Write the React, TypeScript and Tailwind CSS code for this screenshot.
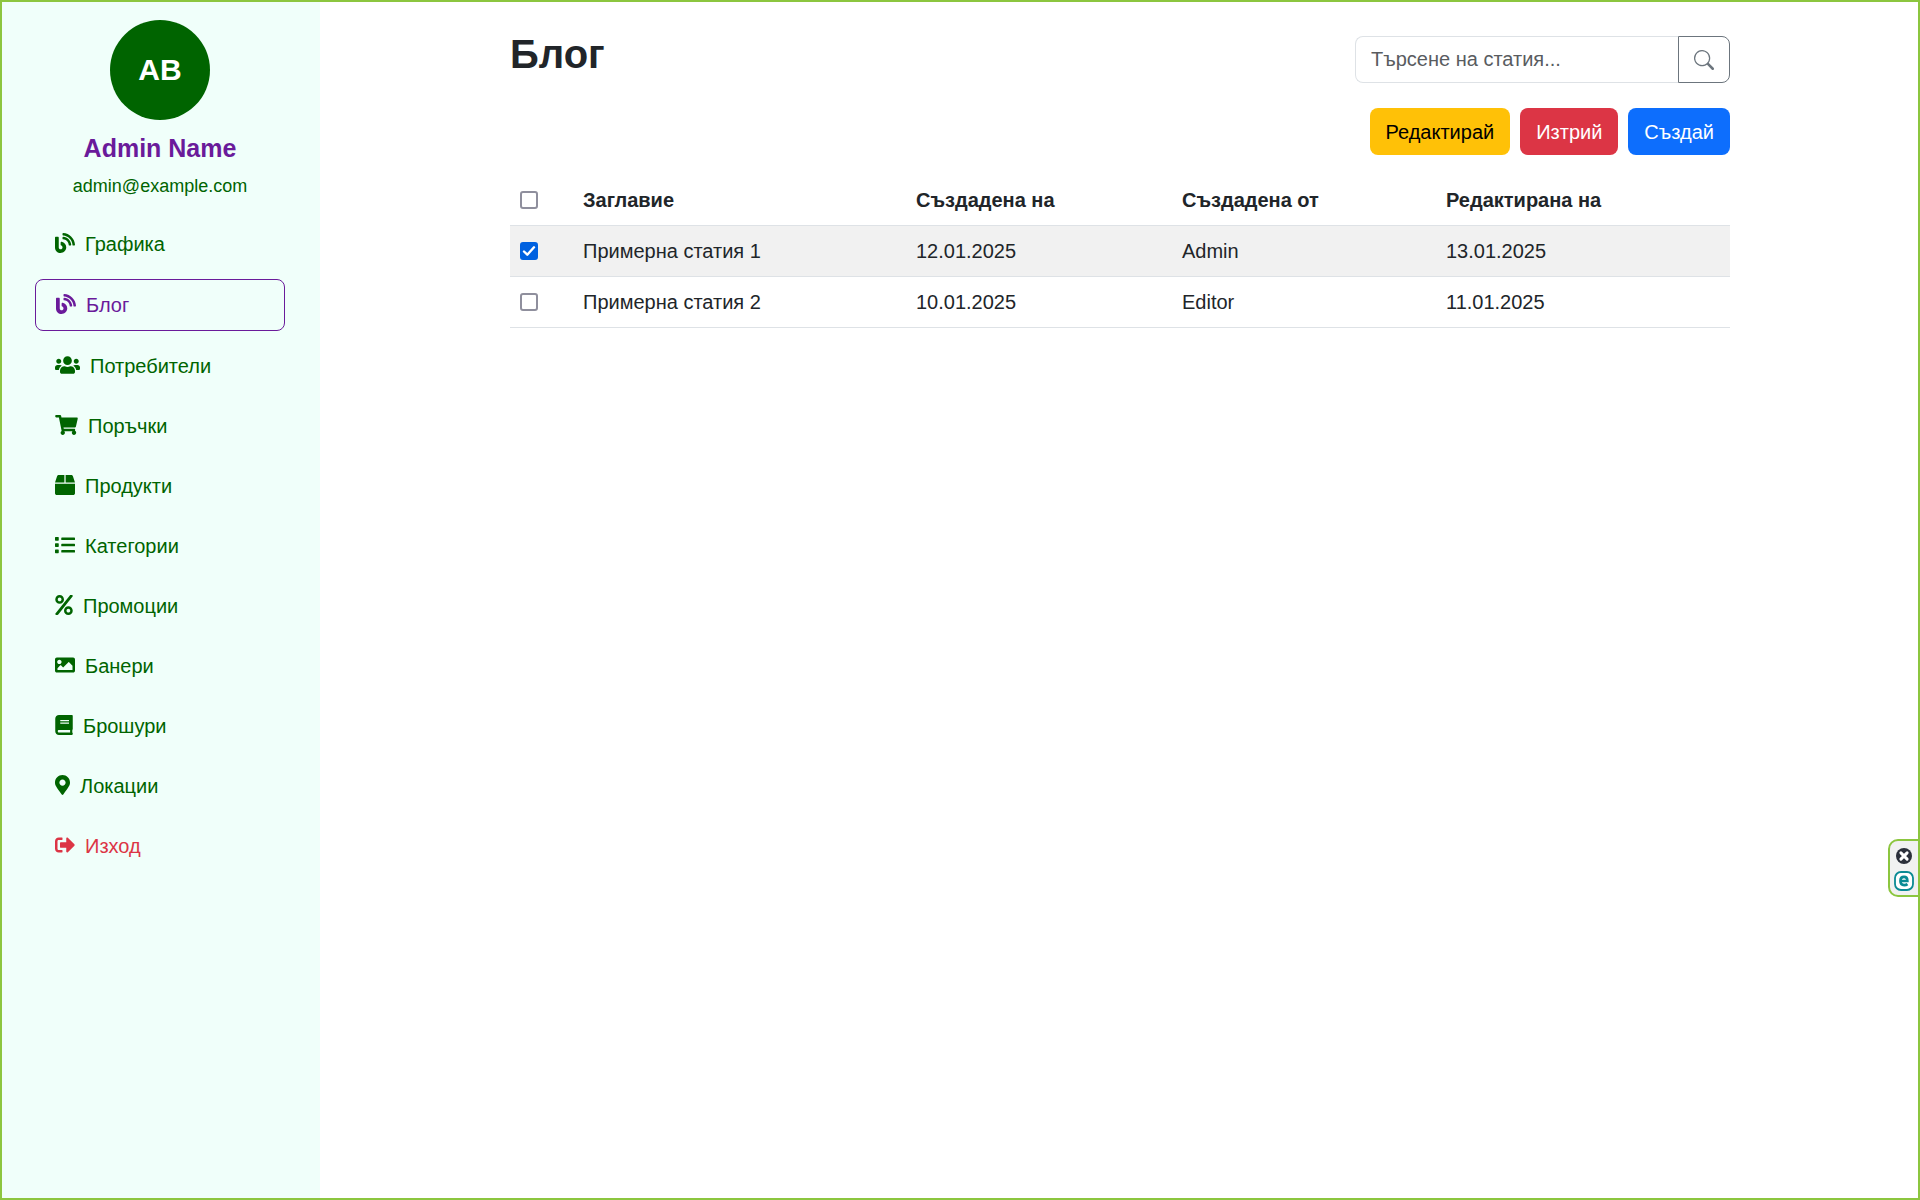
import { useState } from "react";
import type { IconType } from "react-icons";
import {
  FaBlog,
  FaBook,
  FaBox,
  FaImage,
  FaList,
  FaMapMarkerAlt,
  FaPercent,
  FaShoppingCart,
  FaSignOutAlt,
  FaUsers,
} from "react-icons/fa";
import { BsSearch } from "react-icons/bs";

type NavItem = { label: string; icon: IconType; width: string; variant?: "active" | "danger" };

const navItems: NavItem[] = [
  { label: "Графика", icon: FaBlog, width: "w-5" },
  { label: "Блог", icon: FaBlog, width: "w-5", variant: "active" },
  { label: "Потребители", icon: FaUsers, width: "w-[25px]" },
  { label: "Поръчки", icon: FaShoppingCart, width: "w-[23px]" },
  { label: "Продукти", icon: FaBox, width: "w-5" },
  { label: "Категории", icon: FaList, width: "w-5" },
  { label: "Промоции", icon: FaPercent, width: "w-[18px]" },
  { label: "Банери", icon: FaImage, width: "w-5" },
  { label: "Брошури", icon: FaBook, width: "w-[18px]" },
  { label: "Локации", icon: FaMapMarkerAlt, width: "w-[15px]" },
  { label: "Изход", icon: FaSignOutAlt, width: "w-5", variant: "danger" },
];

const navStyles = {
  base: "text-[#006400]",
  active: "rounded-lg border border-[#6a1b9a] text-[#6a1b9a]",
  danger: "text-[#dc3545]",
};

const articles = [
  { id: 1, title: "Примерна статия 1", created: "12.01.2025", author: "Admin", edited: "13.01.2025" },
  { id: 2, title: "Примерна статия 2", created: "10.01.2025", author: "Editor", edited: "11.01.2025" },
];

function Checkbox({ label, checked, onChange }: { label: string; checked: boolean; onChange: () => void }) {
  return (
    <span className="grid size-[18px]">
      <input
        type="checkbox"
        aria-label={label}
        checked={checked}
        onChange={onChange}
        className="peer col-start-1 row-start-1 size-[18px] appearance-none rounded-[3px] border-2 border-[#8f8f9d] bg-white checked:border-[#0061e0] checked:bg-[#0061e0]"
      />
      <svg
        viewBox="0 0 18 18"
        aria-hidden="true"
        className="pointer-events-none col-start-1 row-start-1 hidden size-[18px] peer-checked:block"
      >
        <path
          d="M4 9.5 L7.3 12.7 L14 5.3"
          fill="none"
          stroke="white"
          strokeWidth="2.4"
          strokeLinecap="round"
          strokeLinejoin="round"
        />
      </svg>
    </span>
  );
}

function Sidebar() {
  return (
    <aside className="flex w-80 shrink-0 flex-col items-center bg-[#f0fffa] px-[35px] pt-5">
      <div className="flex size-[100px] items-center justify-center rounded-full bg-[#006400] text-[30px] font-bold text-white">
        AB
      </div>
      <h2 className="mt-3 text-[25px] leading-8 font-bold text-[#6a1b9a]">Admin Name</h2>
      <p className="mt-2 text-[18px] leading-7 text-[#006400]">admin@example.com</p>
      <nav className="mt-[19px] flex w-full flex-col gap-[10px]">
        {navItems.map(({ label, icon: Icon, width, variant }) => (
          <a
            key={label}
            href="#"
            className={`flex items-center gap-[10px] px-5 py-[10px] leading-[30px] ${navStyles[variant ?? "base"]}`}
          >
            <Icon className={`mb-0.5 h-5 shrink-0 ${width}`} />
            {label}
          </a>
        ))}
      </nav>
    </aside>
  );
}

function SafeBrowsingBadge() {
  return (
    <div className="fixed top-[839px] right-0 flex w-8 flex-col items-center gap-[7px] rounded-l-[10px] border-2 border-[#8cc63f] bg-[#f1f1f1] pt-[7px] pb-1">
      <button type="button" aria-label="Close" className="block">
        <svg viewBox="0 0 16 16" className="size-4">
          <circle cx="8" cy="8" r="8" fill="#2b2f3a" />
          <path d="M4.9 4.9 L11.1 11.1 M11.1 4.9 L4.9 11.1" stroke="#fff" strokeWidth="3" strokeLinecap="round" />
        </svg>
      </button>
      <svg viewBox="0 0 20 20" className="size-5" aria-hidden="true">
        <rect x="1" y="1" width="18" height="18" rx="6" fill="#fff" stroke="#0a8a94" strokeWidth="1.8" />
        <path
          d="M6.4 10 H13.4 C13.4 7.3 12.1 5.9 10 5.9 C7.8 5.9 6.4 7.4 6.4 10 C6.4 12.6 7.8 14.1 10.2 14.1 C11.6 14.1 12.6 13.8 13.5 13.1"
          fill="none"
          stroke="#0a8a94"
          strokeWidth="2.6"
        />
      </svg>
    </div>
  );
}

export default function App() {
  const [query, setQuery] = useState("");
  const [selected, setSelected] = useState<number[]>([1]);
  const allSelected = selected.length === articles.length;

  const toggle = (id: number) =>
    setSelected((ids) => (ids.includes(id) ? ids.filter((other) => other !== id) : [...ids, id]));

  return (
    <div className="flex min-h-screen bg-white font-['Liberation_Sans',Arial,sans-serif] text-[20px] leading-[30px] text-[#212529]">
      <Sidebar />
      <main className="min-w-0 flex-1 px-4 pt-[30px]">
        <div className="mx-auto max-w-[1220px]">
          <header className="flex items-start justify-between gap-5">
            <h1 className="text-[40px] leading-[48px] font-bold">Блог</h1>
            <form className="mt-[6px] flex h-[47px] w-[375px]" role="search" onSubmit={(e) => e.preventDefault()}>
              <input
                type="search"
                aria-label="Търсене на статия"
                placeholder="Търсене на статия..."
                value={query}
                onChange={(e) => setQuery(e.target.value)}
                className="min-w-0 flex-1 rounded-l-lg border border-r-0 border-[#dee2e6] px-[15px] pb-0.5 placeholder:text-[#595c5f]"
              />
              <button
                type="submit"
                aria-label="Търси"
                className="flex w-[52px] items-center justify-center rounded-r-lg border border-[#6c757d] text-[#6c757d]"
              >
                <BsSearch className="size-5" />
              </button>
            </form>
          </header>

          <div className="mt-[25px] flex justify-end gap-[10px]">
            <button type="button" className="h-[47px] rounded-lg bg-[#ffc107] px-4 text-black">
              Редактирай
            </button>
            <button type="button" className="h-[47px] rounded-lg bg-[#dc3545] px-4 text-white">
              Изтрий
            </button>
            <button type="button" className="h-[47px] rounded-lg bg-[#0d6efd] px-4 text-white">
              Създай
            </button>
          </div>

          <table className="mt-5 w-full table-fixed border-collapse text-left">
            <colgroup>
              <col className="w-[63px]" />
              <col className="w-[333px]" />
              <col className="w-[266px]" />
              <col className="w-[264px]" />
              <col className="w-[294px]" />
            </colgroup>
            <thead>
              <tr className="border-b border-[#dee2e6]">
                <th className="p-[10px]">
                  <Checkbox
                    label="Избери всички"
                    checked={allSelected}
                    onChange={() => setSelected(allSelected ? [] : articles.map((a) => a.id))}
                  />
                </th>
                <th className="p-[10px]">Заглавие</th>
                <th className="p-[10px]">Създадена на</th>
                <th className="p-[10px]">Създадена от</th>
                <th className="p-[10px]">Редактирана на</th>
              </tr>
            </thead>
            <tbody>
              {articles.map((article) => (
                <tr key={article.id} className="border-b border-[#dee2e6] odd:bg-[#f1f1f1]">
                  <td className="p-[10px]">
                    <Checkbox
                      label={article.title}
                      checked={selected.includes(article.id)}
                      onChange={() => toggle(article.id)}
                    />
                  </td>
                  <td className="p-[10px]">{article.title}</td>
                  <td className="p-[10px]">{article.created}</td>
                  <td className="p-[10px]">{article.author}</td>
                  <td className="p-[10px]">{article.edited}</td>
                </tr>
              ))}
            </tbody>
          </table>
        </div>
      </main>
      <div className="pointer-events-none fixed inset-0 border-2 border-[#8cc63f]" />
      <SafeBrowsingBadge />
    </div>
  );
}
